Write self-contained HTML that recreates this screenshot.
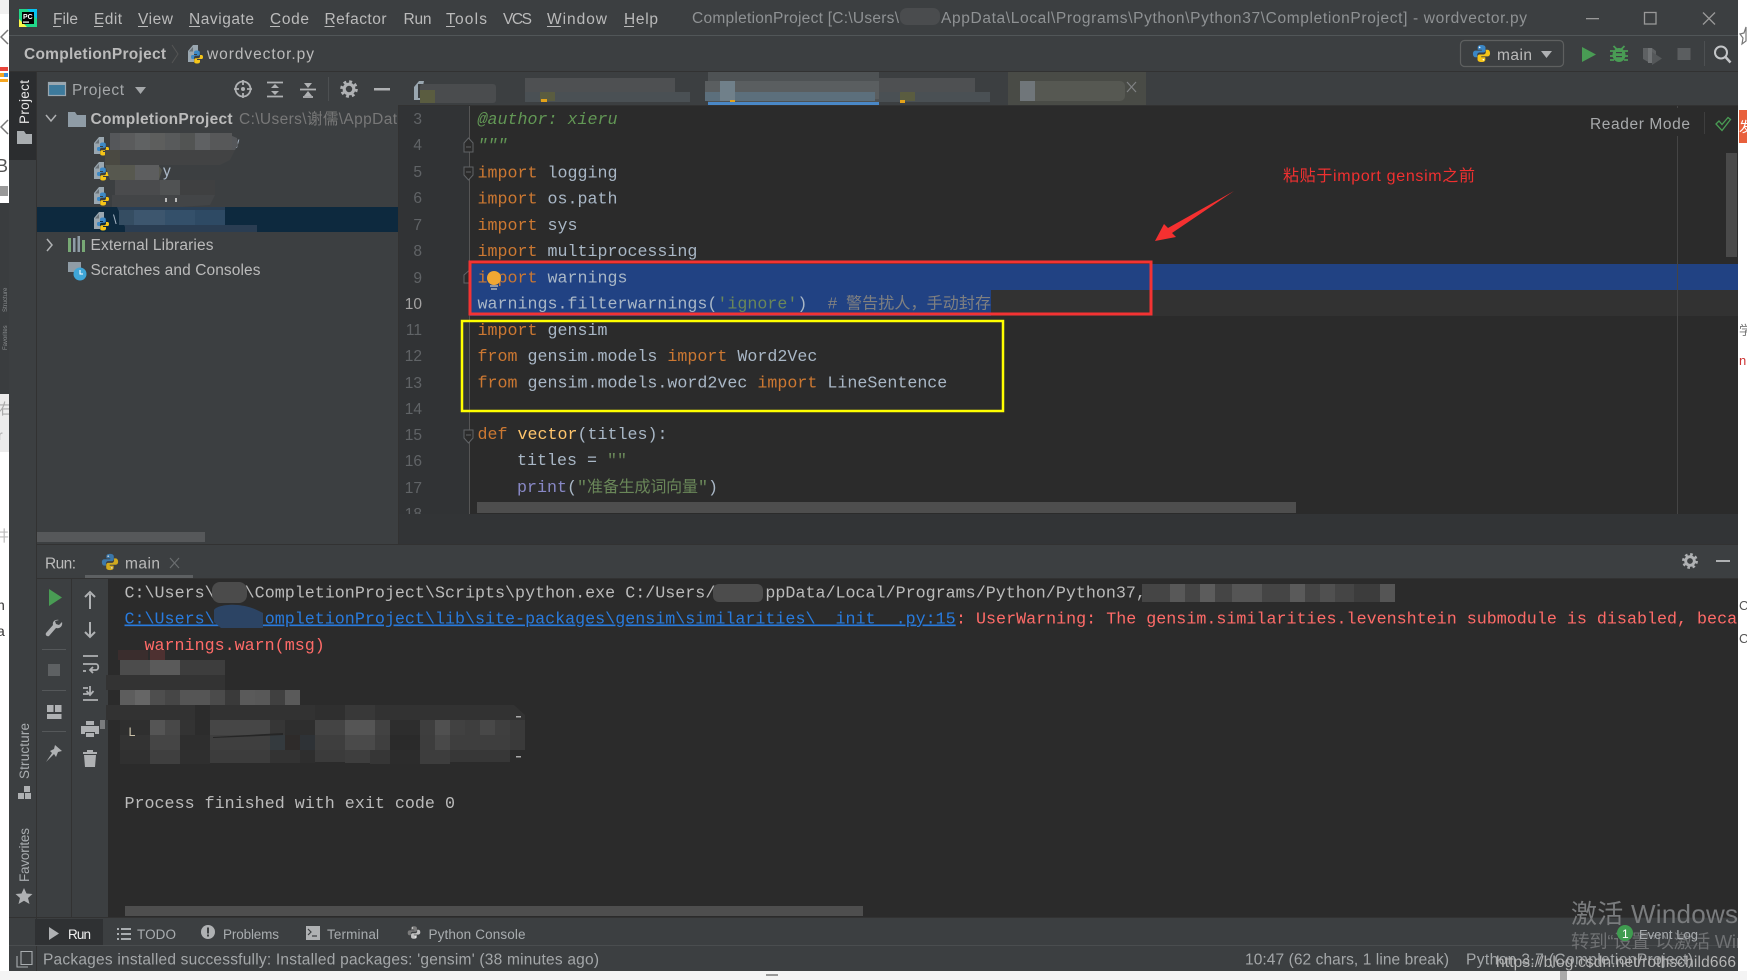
<!DOCTYPE html>
<html lang="zh"><head><meta charset="utf-8"><title>CompletionProject - wordvector.py</title>
<style>
html,body{margin:0;padding:0;width:1747px;height:980px;overflow:hidden;background:#fff}
svg{display:block}
text{font-family:"Liberation Sans","Noto Sans CJK SC",sans-serif;font-size:15.5px;fill:#bbb;white-space:pre}
.m,.m text{font-family:"Liberation Mono","Noto Sans CJK SC",monospace;font-size:16.66px;fill:#a9b7c6}
.k{fill:#cc7832}.n{fill:#606366;font-size:15.5px;text-anchor:end}
.c{font-family:"Liberation Mono","Noto Sans CJK SC",monospace;font-size:16.7px}
.i{fill:none;stroke:#afb1b3;stroke-width:1.8}
.f{fill:#afb1b3}
</style></head><body>
<svg width="1747" height="980" viewBox="0 0 1747 980" xmlns="http://www.w3.org/2000/svg">
<defs>
<symbol id="py" viewBox="0 0 20 20">
<path fill="#3b86c4" d="M10 1C6.600 1 6 2.300 6 3.700V6h4.300v1H3.700C2 7 1 8.300 1 10.300S2 14 3.700 14H5.500v-2.500C5.500 10 6.700 9 8.100 9h3.900c1.300 0 2.200-1 2.200-2.200V3.700C14.200 2.200 12.900 1 10 1z"/>
<circle cx="8" cy="3.500" r=".9" fill="#fff"/>
<path fill="#f5c518" d="M10 19c3.400 0 4-1.300 4-2.700V14H9.700v-1h6.600c1.700 0 2.700-1.300 2.700-3.300S18 6 16.300 6H14.500v2.500c0 1.500-1.200 2.500-2.600 2.500H8c-1.300 0-2.200 1-2.200 2.200v3.100C5.800 17.800 7.100 19 10 19z"/>
<circle cx="12" cy="16.500" r=".9" fill="#fff"/>
</symbol>
<symbol id="pf" viewBox="0 0 16 20">
<path fill="#9aa7b0" d="M1 7 6 1h5v8H7v9H1z"/><path fill="#3c3f41" d="M2 7.500 6 3v4.500z" opacity=".5"/>
<path fill="#3d89c6" d="M10 6.500c-2.500 0-3 1-3 2v1.500h3v1H5.500C4.200 11 4 12 4 13s.4 2 1.500 2H7v-1.500c0-1 .8-1.700 1.800-1.700h2.500c.9 0 1.500-.7 1.500-1.500v-2C12.800 7.300 12 6.500 10 6.500z"/>
<path fill="#f5c518" d="M10 19.500c2.500 0 3-1 3-2V16h-3v-1h4.500c1.300 0 1.500-1 1.500-2s-.4-2-1.500-2H13v1.500c0 1-.8 1.700-1.800 1.700H8.700c-.9 0-1.500.7-1.500 1.500v2c0 1 .8 1.800 2.800 1.800z"/>
</symbol>
<symbol id="gear" viewBox="-10 -10 20 20">
<circle r="4.800" fill="none" stroke="#afb1b3" stroke-width="3.200"/>
<circle r="7.400" fill="none" stroke="#afb1b3" stroke-width="2.800" stroke-dasharray="2.900 2.900"/>
</symbol>
<clipPath id="win"><rect x="9" y="0" width="1729" height="971"/></clipPath>
<clipPath id="ed"><rect x="399" y="105" width="1339" height="409"/></clipPath>
</defs>

<!-- page behind -->
<rect width="1747" height="980" fill="#fff"/>
<rect x="0" y="971" width="1747" height="9" fill="#f4f4f4"/>
<rect x="1560" y="971" width="7" height="9" fill="#aaa"/>
<rect x="766" y="974" width="12" height="2" fill="#999"/>
<rect x="0" y="0" width="9" height="14" fill="#f1f1f1"/>
<path d="M8 30 1 37l7 7M8 120l-7 7 7 7" fill="none" stroke="#777" stroke-width="1.500"/>
<rect x="0" y="67" width="4" height="4" fill="#e8453c"/><rect x="4" y="67" width="4" height="4" fill="#e8453c"/><rect x="0" y="73" width="4" height="4" fill="#f6a723"/><rect x="4" y="73" width="4" height="4" fill="#3b8ede"/><rect x="0" y="79" width="8" height="3" fill="#f6a723"/>
<text x="-4" y="172" style="font-size:18px;fill:#555">B</text>
<rect x="0" y="186" width="8" height="10" fill="#999"/>
<rect x="0" y="203" width="9" height="191" fill="#3a3d3f"/>
<text transform="translate(7,312) rotate(-90)" style="font-size:6px;fill:#8a8d8f">Structure</text>
<text transform="translate(7,350) rotate(-90)" style="font-size:6px;fill:#8a8d8f">Favorites</text>
<rect x="0" y="394" width="9" height="58" fill="#ececec"/>
<text x="-2" y="414" style="font-size:15px;fill:#aaa">右</text>
<text x="-2" y="440" style="font-size:14px;fill:#aaa">r</text>
<text x="-6" y="541" style="font-size:15px;fill:#bbb">井</text>
<text x="-3" y="610" style="font-size:14px;fill:#333">n</text>
<text x="-3" y="636" style="font-size:14px;fill:#333">a</text>

<path d="M1746 27l-2 6-4 1 3 4-1 6 4-3z" fill="none" stroke="#777" stroke-width="1.200"/>
<rect x="1739" y="110" width="8" height="33" fill="#e8603c"/>
<text x="1739" y="132" style="font-size:14px;fill:#fff">发</text>
<text x="1739" y="610" style="font-size:13px;fill:#555">C</text>
<text x="1739" y="643" style="font-size:13px;fill:#555">C</text>
<text x="1739" y="335" style="font-size:13px;fill:#777">学</text>
<text x="1739" y="365" style="font-size:13px;fill:#c33">n</text>

<g clip-path="url(#win)">
<!-- window base -->
<rect x="9" y="0" width="1729" height="971" fill="#3c3f41"/>

<!-- title bar -->
<rect x="19" y="9" width="18" height="18" fill="#21d789"/>
<path d="M19 9h18v9l-6-9zM19 27h8l-8-8z" fill="#fcf84a"/><path d="M27 9h10v10z" fill="#07c3f2"/>
<rect x="22" y="12" width="12" height="12" fill="#000"/>
<text x="23" y="19" style="font-size:7px;font-weight:bold;fill:#fff">PC</text>
<rect x="23" y="21.500" width="6" height="1.200" fill="#fff"/>

<text x="53" y="24" textLength="25">File</text><rect x="53" y="26" width="8" height="1" fill="#bbb"/>
<text x="94" y="24" textLength="28">Edit</text><rect x="94" y="26" width="9" height="1" fill="#bbb"/>
<text x="138" y="24" textLength="35">View</text><rect x="138" y="26" width="10" height="1" fill="#bbb"/>
<text x="189" y="24" textLength="65">Navigate</text><rect x="189" y="26" width="11" height="1" fill="#bbb"/>
<text x="270" y="24" textLength="39">Code</text><rect x="270" y="26" width="10" height="1" fill="#bbb"/>
<text x="324.500" y="24" textLength="62">Refactor</text><rect x="324.500" y="26" width="10" height="1" fill="#bbb"/>
<text x="403.500" y="24" textLength="28">Run</text>
<text x="446" y="24" textLength="41">Tools</text><rect x="446" y="26" width="9" height="1" fill="#bbb"/>
<text x="503" y="24" textLength="29">VCS</text>
<text x="547" y="24" textLength="60">Window</text><rect x="547" y="26" width="14" height="1" fill="#bbb"/>
<text x="624" y="24" textLength="34">Help</text><rect x="624" y="26" width="10" height="1" fill="#bbb"/>

<text x="692" y="23" textLength="207" style="fill:#8f9294">CompletionProject [C:\Users\</text>
<text x="941" y="23" textLength="586" style="fill:#8f9294">AppData\Local\Programs\Python\Python37\CompletionProject] - wordvector.py</text>
<rect x="900" y="8" width="40" height="17" rx="7" fill="#4a4c4e"/>
<rect x="1586" y="18" width="13" height="1.300" fill="#999"/>
<rect x="1644.500" y="12.500" width="11.500" height="11.500" fill="none" stroke="#999" stroke-width="1.300"/>
<path d="M1703 12.500l12 12m0-12l-12 12" stroke="#999" stroke-width="1.300"/>
<rect x="9" y="35" width="1729" height="1" fill="#515658"/>

<!-- nav bar -->
<text x="24" y="59" textLength="142" style="font-weight:bold;fill:#bbb">CompletionProject</text>
<path d="M172 45l6 9-6 9" fill="none" stroke="#555" stroke-width="1"/>
<use href="#pf" x="187" y="44" width="16" height="20"/>
<text x="207" y="59" textLength="107">wordvector.py</text>

<rect x="1460.500" y="40.500" width="103" height="26" rx="4" fill="none" stroke="#5e6060" stroke-width="1.200"/>
<use href="#py" x="1472" y="44" width="19" height="19"/>
<text x="1497" y="60" textLength="35">main</text>
<path d="M1541 51h11l-5.500 7z" fill="#afb1b3"/>
<path d="M1582 47l14 7.500-14 7.500z" fill="#499c54"/>
<g fill="#499c54"><ellipse cx="1619" cy="55" rx="6.500" ry="7"/><path d="M1613.500 46l3 3M1624.500 46l-3 3M1610 51h4M1624 51h4M1610 56h4M1624 56h4M1610 60h4M1624 60h4" stroke="#499c54" stroke-width="1.800" fill="none"/></g>
<rect x="1616" y="52" width="6" height="1.200" fill="#3c3f41"/><rect x="1616" y="56" width="6" height="1.200" fill="#3c3f41"/>
<path d="M1643 48h9l4 3v8l-6 4-7-4z" fill="#5e6163"/><path d="M1652 52l10 6.500-10 6.500z" fill="#55585a"/><path d="M1648 48h4v15h-4z" fill="#707375"/>
<rect x="1677.500" y="48" width="13" height="12" fill="#5b5e60"/>
<rect x="1704" y="41" width="1" height="25" fill="#4d5052"/>
<circle cx="1721" cy="52.500" r="6" fill="none" stroke="#c4c6c8" stroke-width="2"/>
<path d="M1725.500 57l5 5.500" stroke="#c4c6c8" stroke-width="2.500"/>
<rect x="9" y="71" width="1729" height="1" fill="#323232"/>

<!-- left strip -->
<rect x="36" y="72" width="1" height="899" fill="#323232"/>
<rect x="9" y="72" width="27" height="88" fill="#2b2d2f"/>
<text transform="translate(29,124) rotate(-90)" textLength="44" style="font-size:13.500px;fill:#e8e8e8">Project</text>
<path d="M17 131h7l2 3h6v10H17z" fill="#a9adb0"/>
<text transform="translate(29,779) rotate(-90)" textLength="56" style="font-size:13.500px;fill:#a9adb0">Structure</text>
<path d="M24 786h6v6h-6zM18 793h6v6h-6zM25 793h6v6h-6z" fill="#afb1b3"/>
<text transform="translate(29,882) rotate(-90)" textLength="54" style="font-size:13.500px;fill:#a9adb0">Favorites</text>
<path d="M24 888l2.500 5.500 6 .5-4.500 4 1.500 6-5.500-3.200-5.500 3.200 1.500-6-4.500-4 6-.5z" fill="#afb1b3"/>

<!-- project header -->
<rect x="48.500" y="82.500" width="17" height="13" fill="#3d7a9c" stroke="#9aa7b0" stroke-width="1.200"/>
<rect x="48" y="82" width="18" height="3" fill="#9aa7b0"/>
<text x="72" y="95" textLength="52" style="fill:#a4a7a9">Project</text>
<path d="M135 87h11l-5.500 7z" fill="#a4a7a9"/>
<circle cx="243" cy="89" r="7.500" class="i"/><circle cx="243" cy="89" r="2" class="f"/><path d="M243 80v5M243 93v5M234 89h5M247 89h5" class="i"/>
<path d="M267 82.500h16M267 96.500h16" class="i"/><path d="M275 84l-4 4h8zM275 95l-4-4h8z" class="f"/>
<path d="M300 89.500h16" class="i"/><path d="M308 88l-4-5h8zM308 91l-4 5h8z" class="f"/><path d="M303 97h10" class="i"/>
<rect x="328" y="77" width="1" height="24" fill="#4d5052"/>
<use href="#gear" x="339" y="79" width="20" height="20"/>
<rect x="374" y="88" width="16" height="2.500" fill="#afb1b3"/>

<!-- editor tabs -->
<rect x="399" y="72" width="1339" height="33" fill="#3c3f41"/>
<path d="M424 81h-5l-5 6v13h6z" fill="#9aa7b0"/>
<path d="M418 84h6v14h-6z" fill="#3c3f41"/>
<rect x="420" y="84" width="76" height="19" rx="3" fill="#4a4c4e"/><rect x="420" y="90" width="15" height="13" fill="#5a5c40"/>
<g fill="#4e5052"><rect x="525" y="78" width="150" height="14"/><rect x="525" y="92" width="165" height="10" fill="#4a5054"/></g>
<rect x="540" y="92" width="15" height="9" fill="#5a5c40"/>
<rect x="541" y="99" width="6" height="3" fill="#e3a21a"/>
<rect x="708" y="72" width="171" height="30" fill="#4e5254"/>
<rect x="705" y="81" width="174" height="18" fill="#5a5e60"/><rect x="705" y="92" width="170" height="9" fill="#5c6f7c"/>
<rect x="720" y="81" width="15" height="20" fill="#70808a"/>
<rect x="730" y="100" width="5" height="3" fill="#e3a21a"/>
<rect x="708" y="102" width="171" height="4" fill="#4a88c7"/>
<rect x="879" y="78" width="96" height="14" fill="#4e5052"/><rect x="879" y="92" width="111" height="10" fill="#4a5054"/>
<rect x="900" y="92" width="15" height="9" fill="#5a5c40"/><rect x="900" y="100" width="5" height="3" fill="#e3a21a"/>
<rect x="1008" y="72" width="138" height="33" fill="#494b46"/>
<rect x="1020" y="81" width="105" height="20" rx="5" fill="#565852"/><rect x="1020" y="81" width="15" height="20" fill="#70767a"/>
<path d="M1127 82l9 10m0-10l-9 10" stroke="#808284" stroke-width="1.200"/>
<rect x="399" y="105" width="1339" height="1" fill="#323232"/>

<!-- project tree -->
<rect x="37" y="207" width="361" height="25" fill="#0d293e"/>
<path d="M46 115l5 6 5-6" fill="none" stroke="#afb1b3" stroke-width="1.500"/>
<path d="M68 112h7l2 3h9v12H68z" fill="#8f9ca6"/>
<text x="90.500" y="124" textLength="142" style="font-weight:bold">CompletionProject</text>
<text x="239" y="124" textLength="158" style="fill:#787878">C:\Users\谢儒\AppDat</text>
<use href="#pf" x="93" y="136" width="16" height="20"/>
<use href="#pf" x="93" y="161" width="16" height="20"/>
<use href="#pf" x="93" y="186" width="16" height="20"/>
<use href="#pf" x="93" y="211" width="16" height="20"/>
<text x="236" y="148" style="fill:#a9b7c6;font-size:12px">/</text>
<text x="163" y="176" style="fill:#a9b7c6">y</text>
<text x="113" y="224" style="fill:#a9b7c6;font-size:13px">\</text>
<g>
<path d="M110 133h115l12 5 1 7-3 5H110z" fill="#55575a"/>
<rect x="120" y="133" width="15" height="17" fill="#5a5b5c"/><rect x="135" y="133" width="15" height="17" fill="#606263"/><rect x="150" y="133" width="15" height="17" fill="#5d5e5d"/><rect x="165" y="133" width="15" height="17" fill="#585a5b"/><rect x="180" y="133" width="15" height="17" fill="#525453"/><rect x="195" y="133" width="15" height="17" fill="#5f6163"/><rect x="210" y="133" width="22" height="17" fill="#575859"/>
<path d="M105 150h130l-5 10-10 5H105z" fill="#424344"/>
<rect x="105" y="150" width="15" height="15" fill="#4a4942"/>
<path d="M105 165h53l4 5-3 10H110z" fill="#57584f"/><rect x="135" y="165" width="24" height="15" fill="#5d5e5f"/>
<rect x="115" y="180" width="65" height="15" fill="#4a4b4d"/><rect x="160" y="180" width="20" height="15" fill="#505253"/><rect x="180" y="180" width="35" height="15" fill="#3f4041"/>
<path d="M112 195h103l-5 10-30 2h-68z" fill="#434547"/>
<rect x="165" y="198" width="2" height="4" fill="#bbb"/><rect x="175" y="198" width="2" height="4" fill="#bbb"/>
<path d="M117 207h108v25H127z" fill="#2a3f55"/>
<rect x="119" y="210" width="15" height="15" fill="#354d62"/><rect x="134" y="210" width="31" height="15" fill="#3d566e"/><rect x="165" y="210" width="30" height="15" fill="#34506a"/><rect x="195" y="210" width="30" height="15" fill="#2e4a64"/><rect x="125" y="225" width="132" height="7" fill="#2a3d52"/>
</g>
<path d="M47 239l5 6-5 6" fill="none" stroke="#afb1b3" stroke-width="1.500"/>
<path d="M68 238h3v14h-3zM73 238h2.500v14H73zM77.500 236h2.500v16h-2.500zM82 240h3v12h-3z" fill="#8f9ca6"/><path d="M68 238h3v14h-3zM82 240h3v12h-3z" fill="#62b543" opacity=".5"/>
<text x="90.500" y="250" textLength="123">External Libraries</text>
<path d="M68 262h13v10H68z" fill="#8f9ca6"/><circle cx="80" cy="274" r="6.500" fill="#3fa6d8"/><path d="M80 270v4h3" stroke="#fff" stroke-width="1.100" fill="none"/>
<text x="90.500" y="275" textLength="170">Scratches and Consoles</text>
<rect x="37" y="532" width="168" height="10" fill="#56585a"/>
<rect x="398" y="105" width="1" height="439" fill="#323232"/>

<!-- editor -->
<rect x="399" y="106" width="70" height="408" fill="#313335"/>
<rect x="469" y="106" width="1269" height="408" fill="#2b2b2b"/>
<rect x="399" y="514" width="1339" height="30" fill="#323436"/>
<rect x="469" y="106" width="1" height="408" fill="#555"/>
<rect x="470" y="290" width="1268" height="26" fill="#323232"/>
<rect x="470" y="264" width="1268" height="26" fill="#214283"/>
<rect x="470" y="290" width="521" height="26" fill="#214283"/>
<rect x="1677" y="106" width="1" height="408" fill="#454545"/>

<g clip-path="url(#ed)">
<g class="n">
<text class="n" x="422" y="124">3</text><text class="n" x="422" y="150">4</text><text class="n" x="422" y="177">5</text><text class="n" x="422" y="203">6</text><text class="n" x="422" y="230">7</text><text class="n" x="422" y="256">8</text><text class="n" x="422" y="283">9</text>
<text class="n" x="422" y="309" style="fill:#a4a3a3">10</text>
<text class="n" x="422" y="335">11</text><text class="n" x="422" y="361">12</text><text class="n" x="422" y="388">13</text><text class="n" x="422" y="414">14</text><text class="n" x="422" y="440">15</text><text class="n" x="422" y="466">16</text><text class="n" x="422" y="493">17</text><text class="n" x="422" y="519">18</text>
</g>
<path d="M464 152v-9l4.500-5 4.500 5v9zM466 147h5" fill="#2b2b2b" stroke="#606366" stroke-width="1"/>
<path d="M464 167v8l4.500 5 4.500-5v-8zM466 172h5" fill="#2b2b2b" stroke="#606366" stroke-width="1"/>
<path d="M464 283v-8l4.500-4 1 1v11z" fill="#2b2b2b" stroke="#606366" stroke-width="1"/>
<path d="M464 430v8l4.500 5 4.500-5v-8zM466 435h5" fill="#2b2b2b" stroke="#606366" stroke-width="1"/>

<g class="m">
<text x="477.500" y="124" style="font-style:italic;fill:#629755">@author: xieru</text>
<text x="477.500" y="150" style="font-style:italic;fill:#629755">"""</text>
<text x="477.500" y="177.500"><tspan class="k">import</tspan> logging</text>
<text x="477.500" y="203.500"><tspan class="k">import</tspan> os.path</text>
<text x="477.500" y="230"><tspan class="k">import</tspan> sys</text>
<text x="477.500" y="256"><tspan class="k">import</tspan> multiprocessing</text>
<text x="477.500" y="282.500"><tspan class="k">import</tspan> warnings</text>
<text x="477.500" y="308.500">warnings.filterwarnings(<tspan style="fill:#6a8759">'ignore'</tspan>)</text>
<text x="827.500" y="308.500" style="fill:#808080">#</text>
<text x="846" y="308.500" textLength="145" style="fill:#808080;font-size:16px">警告扰人，手动封存</text>
<text x="477.500" y="335"><tspan class="k">import</tspan> gensim</text>
<text x="477.500" y="361"><tspan class="k">from</tspan> gensim.models <tspan class="k">import</tspan> Word2Vec</text>
<text x="477.500" y="387.500"><tspan class="k">from</tspan> gensim.models.word2vec <tspan class="k">import</tspan> LineSentence</text>
<text x="477.500" y="439"><tspan class="k">def</tspan> <tspan style="fill:#ffc66d">vector</tspan>(titles):</text>
<text x="517" y="465">titles = <tspan style="fill:#6a8759">""</tspan></text>
<text x="517" y="492"><tspan style="fill:#8888c6">print</tspan>(<tspan style="fill:#6a8759">"</tspan></text>
<text x="587" y="492" textLength="111" style="fill:#6a8759;font-size:16px">准备生成词向量</text>
<text x="698" y="492"><tspan style="fill:#6a8759">"</tspan>)</text>
</g>
</g>
<circle cx="494" cy="278" r="7" fill="#f0a732"/><path d="M490 286h8M491 289h6" stroke="#afb1b3" stroke-width="1.500"/>
<rect x="477" y="502" width="819" height="11" fill="#4e4e4e"/>
<rect x="1726" y="153" width="11" height="104" fill="#4a4a4a"/>

<rect x="1590" y="108" width="116" height="28" fill="#2b2b2b"/>
<text x="1590" y="129" textLength="100" style="fill:#a8aaac">Reader Mode</text>
<rect x="1704" y="112" width="1" height="22" fill="#3e3e3e"/>
<path d="M1716 124l3-3 3 3.500 6-7 2.500 2-8.500 11z" fill="none" stroke="#499c54" stroke-width="1.300"/>

<!-- annotations -->
<text x="1283" y="181" textLength="192" style="fill:#f03030;font-size:16px">粘贴于import gensim之前</text>
<path d="M1234 191 1168 228 1164 224 1155 241 1176 237 1172 233z" fill="#f53030"/>
<rect x="470" y="262" width="681" height="52" fill="none" stroke="#f43333" stroke-width="3"/>
<rect x="462" y="321" width="541" height="90" fill="none" stroke="#ffff00" stroke-width="2.500"/>

<!-- run panel -->
<rect x="36" y="544" width="1702" height="1" fill="#323232"/>
<text x="45" y="568.500" textLength="31">Run:</text>
<use href="#py" x="101" y="553" width="18" height="18" opacity=".8"/>
<text x="125" y="568.500" textLength="35">main</text>
<path d="M170 558l9 10m0-10l-9 10" stroke="#6b6e70" stroke-width="1.200"/>
<rect x="85" y="575" width="108" height="3.500" fill="#5d6062"/>
<rect x="36" y="578" width="1702" height="1" fill="#323232"/>
<use href="#gear" x="1681" y="552" width="18" height="18"/>
<rect x="1716" y="560" width="14" height="2" fill="#afb1b3"/>
<rect x="71" y="579" width="1" height="338" fill="#323232"/>

<rect x="108" y="579" width="1630" height="338" fill="#2b2b2b"/>

<!-- run tools col 1 -->
<path d="M49 589l13 8.500-13 8.500z" fill="#499c54"/>
<path d="M59 620c-3-1-7 1-6 5l-7 8c-1 2 1 4 3 3l7-8c4 1 7-2 6-6l-3 3-3-1-1-3z" fill="#afb1b3"/>
<rect x="42" y="649" width="24" height="1" fill="#55585a"/>
<rect x="48" y="664" width="12" height="12" fill="#5e6163"/>
<rect x="42" y="690" width="24" height="1" fill="#55585a"/>
<path d="M47 705h6.500v7H47zM55 705h6.500v7H55zM47 714h14.500v5H47z" fill="#afb1b3"/>
<rect x="42" y="731" width="24" height="1" fill="#55585a"/>
<path d="M55 745l7 6-4 1-2 5-2-3-8 8 6-9-2-2 4-2z" fill="#afb1b3"/>
<!-- run tools col 2 -->
<path d="M90 609v-15M85 597l5-5 5 5" fill="none" stroke="#afb1b3" stroke-width="2"/>
<path d="M90 622v14M85 632l5 5 5-5" fill="none" stroke="#afb1b3" stroke-width="2"/>
<path d="M83 656h15M83 664h13c3 0 3 6 0 6h-5M93 667l-3 3 3 3M83 671h3" fill="none" stroke="#afb1b3" stroke-width="1.800"/>
<path d="M83 688h5M83 694h5M83 700h15M90 686v9M86.500 691l3.500 4 3.500-4" fill="none" stroke="#afb1b3" stroke-width="1.800"/>
<path d="M86 721h8v4h-8zM81 726h18v8h-4v-2H85v2h-4zM86 733h8v4h-8z" fill="#afb1b3"/>
<rect x="100" y="720" width="5" height="9" fill="#7a7c7e"/>
<path d="M84 755l1 12h10l1-12zM83 752h14v2H83zM87 750h6v2h-6z" fill="#afb1b3"/>

<!-- console -->
<g class="c">
<text class="c" x="124.500" y="597.500" style="fill:#bbb">C:\Users\   \CompletionProject\Scripts\python.exe C:/Users/     ppData/Local/Programs/Python/Python37,</text>
<text class="c" x="124.500" y="623.500" style="fill:#287bde;text-decoration:underline;text-decoration-skip-ink:none">C:\Users\     ompletionProject\lib\site-packages\gensim\similarities\__init__.py:15</text>
<text class="c" x="956" y="623.500" style="fill:#ff6b68">: UserWarning: The gensim.similarities.levenshtein submodule is disabled, beca</text>
<text class="c" x="144.500" y="650" style="fill:#ff6b68">warnings.warn(msg)</text>
<text class="c" x="124.500" y="808" style="fill:#bbb">Process finished with exit code 0</text>
</g>
<!-- console blurs -->
<rect x="212" y="582" width="35" height="21" rx="8" fill="#4b4b4b"/>
<rect x="713" y="584" width="50" height="18" rx="6" fill="#4c4c4c"/>
<g>
<rect x="1142" y="584" width="212" height="18" fill="#454545"/><rect x="1170" y="584" width="15" height="18" fill="#585858"/><rect x="1200" y="584" width="15" height="18" fill="#5c5c5c"/><rect x="1232" y="584" width="30" height="18" fill="#555"/><rect x="1290" y="584" width="15" height="18" fill="#5a5a5a"/><rect x="1320" y="584" width="15" height="18" fill="#505050"/><rect x="1380" y="584" width="15" height="18" fill="#555"/>
<rect x="1354" y="584" width="26" height="18" fill="#3c3c3c"/>
</g>
<path d="M214 610c2-4 14-6 24-5 8 1 14 2 25 8v15h-42l-7-6z" fill="#2c4464"/>
<rect x="118" y="650" width="30" height="10" fill="#4a2f2f" opacity=".5"/><rect x="150" y="650" width="15" height="10" fill="#5e3434" opacity=".7"/>
<path d="M120 660h45v15h-45z" fill="#4c4c4c"/><path d="M150 660h30v15h-30z" fill="#5a5a5a"/><path d="M180 660h45v15h-45z" fill="#3d3d3d"/>
<path d="M106 675h119v15H106z" fill="#333"/>
<rect x="120" y="690" width="15" height="15" fill="#5d5d5d"/><rect x="135" y="690" width="15" height="15" fill="#666"/><rect x="150" y="690" width="15" height="15" fill="#4e4e4e"/><rect x="165" y="690" width="15" height="15" fill="#464646"/><rect x="180" y="690" width="30" height="15" fill="#555"/><rect x="210" y="690" width="15" height="15" fill="#4b4b4b"/><rect x="225" y="690" width="15" height="15" fill="#3a3a3a"/><rect x="240" y="690" width="15" height="15" fill="#5a5a5a"/><rect x="255" y="690" width="15" height="15" fill="#585858"/><rect x="270" y="690" width="15" height="15" fill="#404040"/><rect x="285" y="690" width="15" height="15" fill="#5a5a5a"/>
<path d="M106 705h408l11 10v5H106z" fill="#323232"/>
<rect x="195" y="705" width="15" height="15" fill="#2c2c2c"/><rect x="315" y="705" width="30" height="15" fill="#2f2f2f"/><rect x="345" y="705" width="30" height="15" fill="#383838"/>
<rect x="120" y="720" width="30" height="15" fill="#2f2f2f"/><rect x="150" y="720" width="15" height="15" fill="#555"/><rect x="165" y="720" width="15" height="15" fill="#484848"/><rect x="180" y="720" width="15" height="15" fill="#333"/><rect x="195" y="720" width="15" height="15" fill="#2c2c2c"/><rect x="210" y="720" width="60" height="15" fill="#464646"/><rect x="270" y="720" width="15" height="15" fill="#363636"/><rect x="285" y="720" width="30" height="15" fill="#2e2e2e"/><rect x="315" y="720" width="30" height="15" fill="#444"/><rect x="345" y="720" width="30" height="15" fill="#555"/><rect x="375" y="720" width="15" height="15" fill="#424242"/><rect x="390" y="720" width="30" height="15" fill="#2d2d2d"/><rect x="420" y="720" width="15" height="15" fill="#3e3e3e"/><rect x="435" y="720" width="15" height="15" fill="#505050"/><rect x="450" y="720" width="15" height="15" fill="#414141"/><rect x="465" y="720" width="15" height="15" fill="#3e3e3e"/><rect x="480" y="720" width="15" height="15" fill="#484848"/><rect x="495" y="720" width="15" height="15" fill="#3f3f3f"/><rect x="510" y="720" width="15" height="15" fill="#3a3a3a"/>
<rect x="120" y="735" width="30" height="15" fill="#333"/><rect x="150" y="735" width="30" height="15" fill="#454545"/><rect x="180" y="735" width="30" height="15" fill="#2e2e2e"/><rect x="210" y="735" width="60" height="15" fill="#3f3f3f"/><rect x="270" y="735" width="15" height="15" fill="#343a3e"/><rect x="285" y="735" width="15" height="15" fill="#2e2b2a"/><rect x="300" y="735" width="15" height="15" fill="#2e3236"/><rect x="315" y="735" width="30" height="15" fill="#3e3e3e"/><rect x="345" y="735" width="30" height="15" fill="#4a4a4a"/><rect x="375" y="735" width="15" height="15" fill="#3f3f3f"/><rect x="390" y="735" width="30" height="15" fill="#2a2a2a"/><rect x="420" y="735" width="15" height="15" fill="#3d3d3d"/><rect x="435" y="735" width="15" height="15" fill="#494949"/><rect x="450" y="735" width="60" height="15" fill="#3e3e3e"/><rect x="510" y="735" width="15" height="15" fill="#3a3a3a"/>
<rect x="120" y="750" width="30" height="14" fill="#303030"/><rect x="150" y="750" width="30" height="14" fill="#3f3f3f"/><rect x="180" y="750" width="30" height="14" fill="#2f2f2f"/><rect x="210" y="750" width="60" height="13" fill="#3c3c3c"/><rect x="270" y="750" width="30" height="13" fill="#333"/><rect x="300" y="750" width="15" height="13" fill="#2e2e2e"/><rect x="315" y="750" width="30" height="12" fill="#3b3b3b"/><rect x="345" y="750" width="25" height="13" fill="#3e3e3e"/><rect x="370" y="750" width="20" height="14" fill="#363636"/><rect x="390" y="750" width="30" height="14" fill="#2c2c2c"/><rect x="420" y="750" width="30" height="14" fill="#3d3d3d"/><rect x="450" y="750" width="60" height="12" fill="#373737"/>
<path d="M213 737l70-4v2l-70 3z" fill="#262626"/>
<text x="128" y="736" class="c" style="font-size:13px;fill:#c9c0a8">L</text>
<rect x="516" y="716" width="5" height="1.500" fill="#aaa"/><rect x="516" y="756" width="5" height="1.500" fill="#aaa"/>
<rect x="125" y="906" width="738" height="10" fill="#4e4e4e"/>

<!-- bottom tool bar -->
<rect x="9" y="917" width="1729" height="1" fill="#323232"/>
<rect x="35" y="919" width="68" height="26" fill="#2f3133"/>
<path d="M49 927l10 6.500-10 6.500z" fill="#afb1b3"/>
<text x="68" y="939" textLength="23" style="font-size:13.500px;fill:#f0f0f0">Run</text>
<path d="M117 928h2v2h-2zM121 928h10v2h-10zM117 933h2v2h-2zM121 933h10v2h-10zM117 938h2v2h-2zM121 938h10v2h-10z" fill="#a9adb0"/>
<text x="137" y="939" textLength="39" style="font-size:13.500px;fill:#a9adb0">TODO</text>
<circle cx="208" cy="932" r="7" fill="#afb1b3"/><rect x="207" y="927.500" width="2" height="6" fill="#3c3f41"/><rect x="207" y="934.500" width="2" height="2" fill="#3c3f41"/>
<text x="223" y="939" textLength="56" style="font-size:13.500px;fill:#a9adb0">Problems</text>
<rect x="306" y="926" width="14" height="14" fill="#afb1b3"/><path d="M308 929l3 3-3 3M312 936h5" stroke="#3c3f41" stroke-width="1.200" fill="none"/>
<text x="327" y="939" textLength="52" style="font-size:13.500px;fill:#a9adb0">Terminal</text>
<use href="#py" x="407" y="925" width="14" height="15" style="filter:grayscale(1)"/>
<text x="428.500" y="939" textLength="97" style="font-size:13.500px;fill:#a9adb0">Python Console</text>

<!-- status -->
<rect x="9" y="945" width="1729" height="1" fill="#4a4d4f"/>
<path d="M21 951.500h11v13H21zM17 956v11h11" fill="none" stroke="#a9adb0" stroke-width="1.100"/>
<text x="43" y="964.500" textLength="556" style="fill:#a4a7a9">Packages installed successfully: Installed packages: 'gensim' (38 minutes ago)</text>
<text x="1245" y="964.500" textLength="204" style="fill:#a4a7a9">10:47 (62 chars, 1 line break)</text>
<text x="1466" y="964.500" textLength="227" style="fill:#a4a7a9">Python 3.7 (CompletionProject)</text>
<text x="1496" y="967" textLength="240" style="fill:#b5b5b5">https://blog.csdn.net/rothschild666</text>

<!-- watermark + event log -->
<text x="1571" y="923" textLength="167" style="font-size:26px;fill:#7a7c7e">激活 Windows</text>
<text x="1571" y="948" textLength="175" style="font-size:18.500px;fill:#6f7173">转到“设置”以激活 Win</text>
<circle cx="1625" cy="933" r="8" fill="#3f9c50"/>
<text x="1622" y="938" style="font-size:12px;fill:#fff">1</text>
<text x="1639" y="939" textLength="59" style="font-size:13px;fill:#a9adb0">Event Log</text>
</g>
</svg>
</body></html>
